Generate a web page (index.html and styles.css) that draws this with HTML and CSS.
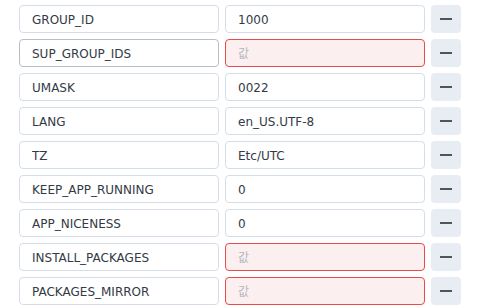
FILE: index.html
```html
<!DOCTYPE html>
<html lang="ko">
<head>
  <meta charset="UTF-8">
  <title>Environment</title>
  <link rel="stylesheet" href="styles.css">
</head>
<body>
  <div class="env-list">
    <div class="env-row">
      <input class="env-key" type="text" value="GROUP_ID">
      <input class="env-value" type="text" value="1000">
      <button class="remove-btn"><span class="minus"></span></button>
    </div>
    <div class="env-row">
      <input class="env-key hover" type="text" value="SUP_GROUP_IDS">
      <input class="env-value invalid" type="text" placeholder="값">
      <button class="remove-btn"><span class="minus"></span></button>
    </div>
    <div class="env-row">
      <input class="env-key" type="text" value="UMASK">
      <input class="env-value" type="text" value="0022">
      <button class="remove-btn"><span class="minus"></span></button>
    </div>
    <div class="env-row">
      <input class="env-key" type="text" value="LANG">
      <input class="env-value" type="text" value="en_US.UTF-8">
      <button class="remove-btn"><span class="minus"></span></button>
    </div>
    <div class="env-row">
      <input class="env-key" type="text" value="TZ">
      <input class="env-value" type="text" value="Etc/UTC">
      <button class="remove-btn"><span class="minus"></span></button>
    </div>
    <div class="env-row">
      <input class="env-key" type="text" value="KEEP_APP_RUNNING">
      <input class="env-value" type="text" value="0">
      <button class="remove-btn"><span class="minus"></span></button>
    </div>
    <div class="env-row">
      <input class="env-key" type="text" value="APP_NICENESS">
      <input class="env-value" type="text" value="0">
      <button class="remove-btn"><span class="minus"></span></button>
    </div>
    <div class="env-row">
      <input class="env-key" type="text" value="INSTALL_PACKAGES">
      <input class="env-value invalid" type="text" placeholder="값">
      <button class="remove-btn"><span class="minus"></span></button>
    </div>
    <div class="env-row">
      <input class="env-key" type="text" value="PACKAGES_MIRROR">
      <input class="env-value invalid" type="text" placeholder="값">
      <button class="remove-btn"><span class="minus"></span></button>
    </div>
  </div>
</body>
</html>
```

FILE: styles.css
```css
body {
  margin: 0;
  background-color: #ffffff;
  font-family: "DejaVu Sans", "Noto Sans CJK KR", sans-serif;
  font-size: 12px;
}

.env-list {
  display: flex;
  flex-direction: column;
  gap: 6px;
  padding: 5px 0 0 19px;
}

.env-row {
  display: flex;
  gap: 6px;
}

input {
  box-sizing: border-box;
  width: 200px;
  height: 28px;
  margin: 0;
  padding: 1px 12px 0;
  border: 1px solid #d5dee8;
  border-radius: 4px;
  background-color: #fff;
  color: #333a45;
  font-family: "DejaVu Sans", "Noto Sans CJK KR", sans-serif;
  font-size: 12px;
  outline: none;
}

.env-key.hover {
  border-color: #b9bec6;
}

.env-value.invalid {
  border-color: #e84b4b;
  background-color: #fcefef;
}

input::placeholder {
  color: #b4b8be;
}

.remove-btn {
  box-sizing: border-box;
  width: 30px;
  height: 28px;
  padding: 0;
  border: none;
  border-radius: 4px;
  background-color: #e8ecf3;
  display: flex;
  align-items: center;
  justify-content: center;
  cursor: pointer;
}

.minus {
  display: block;
  width: 12px;
  height: 2px;
  background-color: #50555d;
}
```
